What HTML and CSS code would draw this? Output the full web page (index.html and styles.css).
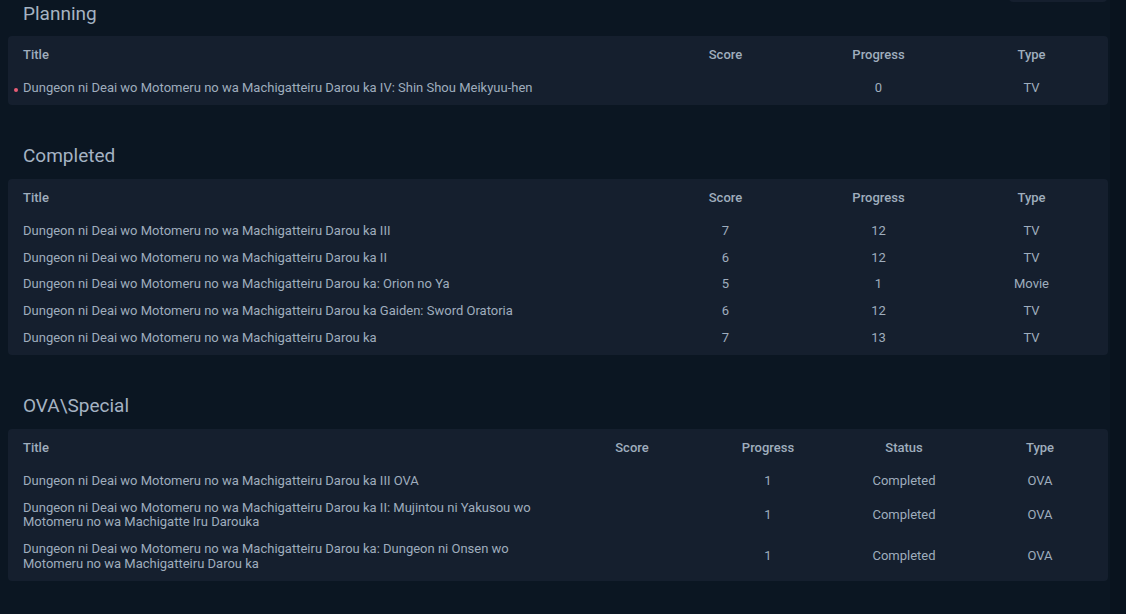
FILE: index.html
```html
<!DOCTYPE html>
<html lang="en">
<head>
<meta charset="utf-8">
<title>List</title>
<link rel="stylesheet" href="styles.css">
</head>
<body>
<div class="page">
  <main class="main">
    <div class="top-tab"></div>

    <section class="section first">
      <h2 class="heading">Planning</h2>
      <div class="card">
        <div class="row head cols4">
          <div class="c-title">Title</div>
          <div class="c">Score</div>
          <div class="c">Progress</div>
          <div class="c">Type</div>
        </div>
        <div class="row cols4">
          <div class="c-title"><span class="dot"></span>Dungeon ni Deai wo Motomeru no wa Machigatteiru Darou ka IV: Shin Shou Meikyuu-hen</div>
          <div class="c"></div>
          <div class="c">0</div>
          <div class="c">TV</div>
        </div>
      </div>
    </section>

    <section class="section">
      <h2 class="heading">Completed</h2>
      <div class="card">
        <div class="row head cols4">
          <div class="c-title">Title</div>
          <div class="c">Score</div>
          <div class="c">Progress</div>
          <div class="c">Type</div>
        </div>
        <div class="row cols4">
          <div class="c-title">Dungeon ni Deai wo Motomeru no wa Machigatteiru Darou ka III</div>
          <div class="c">7</div><div class="c">12</div><div class="c">TV</div>
        </div>
        <div class="row cols4">
          <div class="c-title">Dungeon ni Deai wo Motomeru no wa Machigatteiru Darou ka II</div>
          <div class="c">6</div><div class="c">12</div><div class="c">TV</div>
        </div>
        <div class="row cols4">
          <div class="c-title">Dungeon ni Deai wo Motomeru no wa Machigatteiru Darou ka: Orion no Ya</div>
          <div class="c">5</div><div class="c">1</div><div class="c">Movie</div>
        </div>
        <div class="row cols4">
          <div class="c-title">Dungeon ni Deai wo Motomeru no wa Machigatteiru Darou ka Gaiden: Sword Oratoria</div>
          <div class="c">6</div><div class="c">12</div><div class="c">TV</div>
        </div>
        <div class="row cols4">
          <div class="c-title">Dungeon ni Deai wo Motomeru no wa Machigatteiru Darou ka</div>
          <div class="c">7</div><div class="c">13</div><div class="c">TV</div>
        </div>
      </div>
    </section>

    <section class="section">
      <h2 class="heading">OVA\Special</h2>
      <div class="card">
        <div class="row head cols5">
          <div class="c-title">Title</div>
          <div class="c">Score</div>
          <div class="c">Progress</div>
          <div class="c">Status</div>
          <div class="c">Type</div>
        </div>
        <div class="row cols5">
          <div class="c-title">Dungeon ni Deai wo Motomeru no wa Machigatteiru Darou ka III OVA</div>
          <div class="c"></div><div class="c">1</div><div class="c">Completed</div><div class="c">OVA</div>
        </div>
        <div class="row cols5">
          <div class="c-title">Dungeon ni Deai wo Motomeru no wa Machigatteiru Darou ka II: Mujintou ni Yakusou wo Motomeru no wa Machigatte Iru Darouka</div>
          <div class="c"></div><div class="c">1</div><div class="c">Completed</div><div class="c">OVA</div>
        </div>
        <div class="row cols5">
          <div class="c-title">Dungeon ni Deai wo Motomeru no wa Machigatteiru Darou ka: Dungeon ni Onsen wo Motomeru no wa Machigatteiru Darou ka</div>
          <div class="c"></div><div class="c">1</div><div class="c">Completed</div><div class="c">OVA</div>
        </div>
      </div>
    </section>
  </main>
  <div class="gutter"></div>
</div>
</body>
</html>
```

FILE: styles.css
```css
html, body {
  margin: 0;
  padding: 0;
  height: 100%;
}
body {
  background: #0b1622;
  color: #9fadbd;
  font-family: Roboto, "Liberation Sans", Arial, sans-serif;
  font-size: 13px;
  overflow: hidden;
}
.page {
  display: flex;
  min-height: 100%;
}
.main {
  position: relative;
  width: 1100px;
  padding: 0 2px 0 8px;
  display: flex;
  flex-direction: column;
  gap: 39px;
}
.gutter {
  flex: 1;
  background: #09131e;
}
.top-tab {
  position: absolute;
  top: -30px;
  left: 1009px;
  width: 98px;
  height: 32px;
  background: #151f2e;
  border-radius: 4px;
}
.heading {
  margin: 0 0 11px 15px;
  font-size: 19px;
  font-weight: 400;
  line-height: 24px;
  color: #a5b3c3;
}
.first .heading {
  margin-top: 2px;
  margin-bottom: 10px;
}
.card {
  background: #151f2e;
  border-radius: 4px;
  padding: 0.6px 0 3.4px;
}
.row {
  display: grid;
  align-items: center;
  line-height: 14.6px;
  padding: 6.1px 0;
}
.cols4 {
  grid-template-columns: 1fr repeat(3, 153px);
}
.cols5 {
  grid-template-columns: 1fr repeat(4, 136px);
}
.row.head {
  padding: 11.3px 0 12.3px;
  font-weight: 500;
}
.c-title {
  position: relative;
  padding: 0 15px;
}
.cols5 .c-title {
  padding-right: 22px;
}
.c {
  text-align: center;
}
.dot {
  position: absolute;
  left: 6px;
  top: 7px;
  width: 4px;
  height: 4px;
  border-radius: 50%;
  background: #e85d75;
}
```
